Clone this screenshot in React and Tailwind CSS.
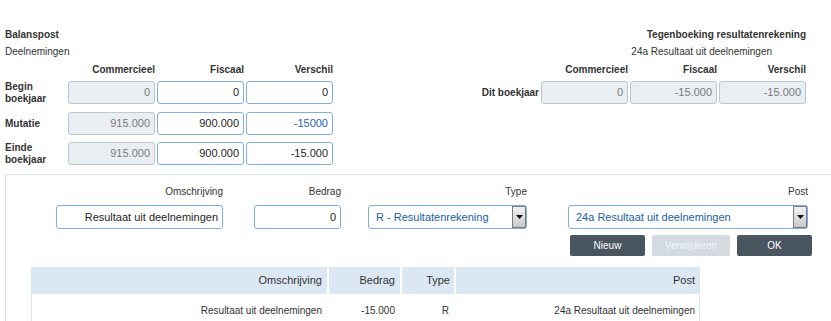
const font = "font-['Liberation_Sans',Arial,sans-serif]";

function Field({ value, disabled, blue }) {
  return (
    <div
      className={
        "h-[23px] rounded-[3px] border text-right pr-[4px] text-[11px] leading-[21px] " +
        (disabled
          ? "bg-[#e9eef2] border-[#bcc7d1] text-[#7b7b7b]"
          : "bg-white border-[#7eaee8] " + (blue ? "text-[#1f64b0]" : "text-[#262626]"))
      }
    >
      {value}
    </div>
  );
}

function Head({ children }) {
  return <div className="text-right text-[10px] font-bold leading-[14px] text-[#333]">{children}</div>;
}

function RowLabel({ children, right }) {
  return (
    <div
      className={
        "flex items-center text-[10px] font-bold leading-[12px] text-[#333] " +
        (right ? "justify-end" : "")
      }
    >
      {children}
    </div>
  );
}

function Select({ value, width }) {
  return (
    <div
      className={
        "flex h-[24px] items-stretch rounded-[3px] border border-[#7eaee8] bg-white " + width
      }
    >
      <div className="flex-1 pl-[7px] text-[11px] leading-[22px] text-[#1a5ea8]">{value}</div>
      <div className="flex w-[14px] items-center justify-center border border-[#7a7a7a] bg-gradient-to-b from-[#f2f2f2] to-[#c9c9c9]">
        <svg width="7" height="4" viewBox="0 0 7 4">
          <path d="M0 0 H7 L3.5 4 Z" fill="#111" />
        </svg>
      </div>
    </div>
  );
}

function FormField({ label, className, children }) {
  return (
    <div className={"flex flex-col " + className}>
      <div className="h-[14px] text-right text-[10px] leading-[14px] text-[#333]">{label}</div>
      <div className="mt-[6px]">{children}</div>
    </div>
  );
}

function Button({ children, disabled, width }) {
  return (
    <div
      className={
        "flex h-[21px] items-center justify-center rounded-[2px] text-[10px] " +
        width +
        (disabled ? " bg-[#d3dae0] text-[#f3f5f7]" : " bg-[#4a565f] text-white")
      }
    >
      {children}
    </div>
  );
}

export default function App() {
  return (
    <div className={"relative h-[321px] w-[831px] overflow-hidden bg-white text-[#333] " + font}>
      <div className="flex pt-[28px]">
        {/* Balanspost */}
        <div className="ml-[5px] w-[328px]">
          <div className="h-[14px] text-[10px] font-bold leading-[14px]">Balanspost</div>
          <div className="mt-[3px] h-[14px] text-[10px] leading-[14px]">Deelnemingen</div>
          <div className="mt-[4px] grid grid-cols-[61px_87px_87px_87px] gap-x-[2px]">
            <div />
            <Head>Commercieel</Head>
            <Head>Fiscaal</Head>
            <Head>Verschil</Head>
          </div>
          <div className="mt-[4px] grid grid-cols-[61px_87px_87px_87px] gap-x-[2px] gap-y-[7px]">
            <RowLabel>
              Begin
              <br />
              boekjaar
            </RowLabel>
            <Field value="0" disabled />
            <Field value="0" />
            <Field value="0" />
            <RowLabel>Mutatie</RowLabel>
            <Field value="915.000" disabled />
            <Field value="900.000" />
            <Field value="-15000" blue />
            <RowLabel>
              Einde
              <br />
              boekjaar
            </RowLabel>
            <Field value="915.000" disabled />
            <Field value="900.000" />
            <Field value="-15.000" />
          </div>
        </div>

        {/* Tegenboeking */}
        <div className="ml-auto mr-[25px]">
          <div className="h-[14px] text-right text-[10px] font-bold leading-[14px]">
            Tegenboeking resultatenrekening
          </div>
          <div className="mt-[3px] h-[14px] pr-[34px] text-right text-[10px] leading-[14px]">
            24a Resultaat uit deelnemingen
          </div>
          <div className="mt-[4px] grid grid-cols-[59px_87px_87px_87px] gap-x-[2px]">
            <div />
            <Head>Commercieel</Head>
            <Head>Fiscaal</Head>
            <Head>Verschil</Head>
          </div>
          <div className="mt-[4px] grid grid-cols-[59px_87px_87px_87px] gap-x-[2px]">
            <RowLabel right>Dit boekjaar</RowLabel>
            <Field value="0" disabled />
            <Field value="-15.000" disabled />
            <Field value="-15.000" disabled />
          </div>
        </div>
      </div>

      {/* Boekingen paneel */}
      <div className="ml-[5px] mt-[8px] w-[900px] border-l border-t border-[#d8e3ef] pt-[10px]">
        <div className="flex">
          <FormField label="Omschrijving" className="ml-[50px] w-[167px]">
            <div className="h-[24px] rounded-[3px] border border-[#7eaee8] bg-white pr-[4px] text-right text-[11px] leading-[22px] text-[#262626]">
              Resultaat uit deelnemingen
            </div>
          </FormField>
          <FormField label="Bedrag" className="ml-[31px] w-[87px]">
            <div className="h-[24px] rounded-[3px] border border-[#7eaee8] bg-white pr-[4px] text-right text-[11px] leading-[22px] text-[#262626]">
              0
            </div>
          </FormField>
          <FormField label="Type" className="ml-[27px] w-[159px]">
            <Select value="R - Resultatenrekening" width="w-[159px]" />
          </FormField>
          <FormField label="Post" className="ml-[41px] w-[240px]">
            <Select value="24a Resultaat uit deelnemingen" width="w-[240px]" />
          </FormField>
        </div>

        <div className="mt-[6px] flex w-[806px] justify-end gap-[7px]">
          <Button width="w-[75px]">Nieuw</Button>
          <Button width="w-[78px]" disabled>
            Verwijderen
          </Button>
          <Button width="w-[75px]">OK</Button>
        </div>

        <div className="ml-[25px] mt-[11px] w-[669px] border-x border-[#dbe6f2]">
          <div className="flex h-[27px] gap-[2px] bg-white text-[11px] text-[#333]">
            <div className="flex w-[295px] items-center justify-end bg-[#dbe7f3] pr-[5px]">Omschrijving</div>
            <div className="flex w-[71px] items-center justify-end bg-[#dbe7f3] pr-[5px]">Bedrag</div>
            <div className="flex w-[52px] items-center justify-end bg-[#dbe7f3] pr-[4px]">Type</div>
            <div className="flex flex-1 items-center justify-end bg-[#dbe7f3] pr-[4px]">Post</div>
          </div>
          <div className="flex h-[32px] gap-[2px] text-[10px] text-[#333]">
            <div className="flex w-[295px] items-center justify-end pr-[5px]">Resultaat uit deelnemingen</div>
            <div className="flex w-[71px] items-center justify-end pr-[5px]">-15.000</div>
            <div className="flex w-[52px] items-center justify-end pr-[5px]">R</div>
            <div className="flex flex-1 items-center justify-end pr-[4px]">24a Resultaat uit deelnemingen</div>
          </div>
        </div>
      </div>
    </div>
  );
}
